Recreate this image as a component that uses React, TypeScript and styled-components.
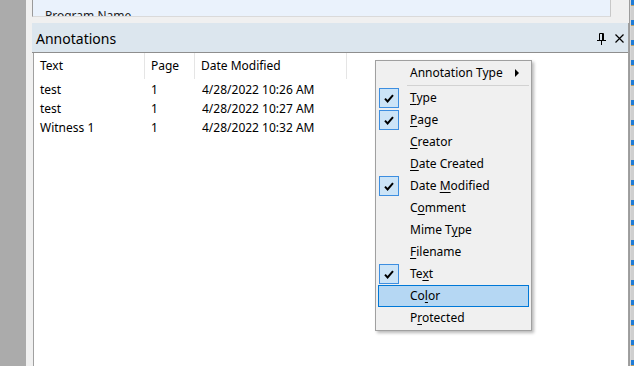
import styled, { createGlobalStyle } from "styled-components";

const GlobalStyle = createGlobalStyle`
  html, body {
    margin: 0;
    padding: 0;
    overflow: hidden;
    background: #f0f0f0;
  }
  * {
    box-sizing: border-box;
  }
`;

const FONT = `"Segoe UI", "Noto Sans", "DejaVu Sans", sans-serif`;

type Column = { key: string; title: string; width: number };

const columns: Column[] = [
  { key: "text", title: "Text", width: 111 },
  { key: "page", title: "Page", width: 50 },
  { key: "modified", title: "Date Modified", width: 152 },
];

const rows = [
  { text: "test", page: "1", modified: "4/28/2022 10:26 AM" },
  { text: "test", page: "1", modified: "4/28/2022 10:27 AM" },
  { text: "Witness 1", page: "1", modified: "4/28/2022 10:32 AM" },
];

type MenuItem = { label: string; mnemonic?: number; checked?: boolean; hot?: boolean };

const menuItems: MenuItem[] = [
  { label: "Type", mnemonic: 0, checked: true },
  { label: "Page", mnemonic: 0, checked: true },
  { label: "Creator", mnemonic: 0 },
  { label: "Date Created", mnemonic: 0 },
  { label: "Date Modified", mnemonic: 5, checked: true },
  { label: "Comment", mnemonic: 1 },
  { label: "Mime Type", mnemonic: 6 },
  { label: "Filename", mnemonic: 0 },
  { label: "Text", mnemonic: 2, checked: true },
  { label: "Color", mnemonic: 2, hot: true },
  { label: "Protected", mnemonic: 1 },
];

const Mnemonic = ({ label, index }: { label: string; index?: number }) => {
  if (index === undefined) return <>{label}</>;
  return (
    <>
      {label.slice(0, index)}
      <u>{label[index]}</u>
      {label.slice(index + 1)}
    </>
  );
};

const CheckMark = () => (
  <svg width="10" height="9" viewBox="0 0 10 9">
    <path d="M1 4.6 L3.6 7.4 L9 1.2" fill="none" stroke="#000" strokeWidth="2" />
  </svg>
);

const PinIcon = () => (
  <svg width="9" height="12" viewBox="0 0 9 12">
    <path d="M2.5 0.5 H6.5 V7.5 M2.5 0.5 V7.5" fill="none" stroke="#000" strokeWidth="1" />
    <path d="M5.5 1 V7" stroke="#000" strokeWidth="1" />
    <path d="M0 7.5 H9" stroke="#000" strokeWidth="1" />
    <path d="M4.5 8 V12" stroke="#000" strokeWidth="1" />
  </svg>
);

const CloseIcon = () => (
  <svg width="9" height="9" viewBox="0 0 9 9">
    <path d="M0.5 0.5 L8.5 8.5 M8.5 0.5 L0.5 8.5" stroke="#000" strokeWidth="1.2" />
  </svg>
);

export default function App() {
  return (
    <>
      <GlobalStyle />
      <Screen>
        <SideGutter />
        <Workspace>
          <TopDock>
            <DocumentPane>
              <ClippedLabel>Program Name</ClippedLabel>
            </DocumentPane>
            <DockFiller />
          </TopDock>
          <DockPanel>
            <PanelHeader>
              <PanelTitle>Annotations</PanelTitle>
              <HeaderButtons>
                <PinIcon />
                <CloseIcon />
              </HeaderButtons>
            </PanelHeader>
            <PanelBody>
              <Grid>
                <HeaderRow>
                  {columns.map(c => (
                    <HeaderCell key={c.key} $width={c.width}>
                      {c.title}
                    </HeaderCell>
                  ))}
                </HeaderRow>
                {rows.map((r, i) => (
                  <DataRow key={i}>
                    <Cell $width={columns[0].width}>{r.text}</Cell>
                    <Cell $width={columns[1].width}>{r.page}</Cell>
                    <Cell $width={columns[2].width}>{r.modified}</Cell>
                  </DataRow>
                ))}
              </Grid>

              <ContextMenu>
                <MenuRow>
                  <CheckSlot />
                  <MenuLabel>Annotation Type</MenuLabel>
                  <SubArrow />
                </MenuRow>
                <MenuSeparator />
                {menuItems.map(item => (
                  <MenuRow key={item.label} $hot={item.hot}>
                    <CheckSlot>
                      {item.checked && (
                        <CheckBox>
                          <CheckMark />
                        </CheckBox>
                      )}
                    </CheckSlot>
                    <MenuLabel>
                      <Mnemonic label={item.label} index={item.mnemonic} />
                    </MenuLabel>
                  </MenuRow>
                ))}
              </ContextMenu>
            </PanelBody>
          </DockPanel>
        </Workspace>
        <RightEdge />
      </Screen>
    </>
  );
}

const Screen = styled.div`
  display: flex;
  width: 634px;
  height: 366px;
  font-family: ${FONT};
  font-size: 12px;
  color: #000;
`;

const SideGutter = styled.div`
  width: 26px;
  flex-shrink: 0;
  background: #ababab;
  border-right: 6px solid #f0f0f0;
  box-sizing: content-box;
`;

const Workspace = styled.div`
  flex: 1;
  display: flex;
  flex-direction: column;
  min-width: 0;
`;

const TopDock = styled.div`
  display: flex;
  height: 17px;
  border-bottom: 6px solid #f0f0f0;
  box-sizing: content-box;
`;

const DocumentPane = styled.div`
  flex: 1;
  background: #eaf2fc;
  border-left: 1px solid #9a9a9a;
  border-right: 1px solid #c8c8c8;
  border-bottom: 1px solid #dadada;
  overflow: hidden;
  padding-left: 12px;
`;

const ClippedLabel = styled.div`
  margin-top: 7px;
  font-size: 12px;
  white-space: nowrap;
  color: #222;
`;

const DockFiller = styled.div`
  width: 18px;
  background: #f0f0f0;
`;

const DockPanel = styled.div`
  flex: 1;
  display: flex;
  flex-direction: column;
  border-right: 1px solid #a0a0a0;
`;

const PanelHeader = styled.div`
  height: 30px;
  display: flex;
  align-items: center;
  justify-content: space-between;
  background: #dce6ee;
  border-bottom: 1px solid #8e8e8e;
  padding: 0 4px 0 4px;
`;

const PanelTitle = styled.span`
  font-size: 14px;
  padding-top: 1px;
`;

const HeaderButtons = styled.div`
  display: flex;
  align-items: center;
  gap: 9px;
  padding-top: 2px;
`;

const PanelBody = styled.div`
  flex: 1;
  position: relative;
  background: #fff;
  border-left: 1px solid #a0a0a0;
  margin-left: 1px;
`;

const Grid = styled.div`
  display: flex;
  flex-direction: column;
`;

const HeaderRow = styled.div`
  display: flex;
  height: 26px;
`;

const HeaderCell = styled.div<{ $width: number }>`
  width: ${p => p.$width}px;
  padding: 4px 0 0 6px;
  border-right: 1px solid #e5e5e5;
  line-height: 18px;
`;

const DataRow = styled.div`
  display: flex;
  height: 19px;
  align-items: center;
  padding-top: 1px;
`;

const Cell = styled.div<{ $width: number }>`
  width: ${p => p.$width}px;
  padding-left: 6px;
  white-space: nowrap;
  &:nth-child(3) {
    padding-left: 7px;
  }
`;

const ContextMenu = styled.div`
  position: absolute;
  left: 341px;
  top: 7px;
  width: 157px;
  background: #f0f0f0;
  border: 1px solid #a0a0a0;
  padding: 1px 2px;
  box-shadow: 2px 2px 3px rgba(0, 0, 0, 0.28);
  display: flex;
  flex-direction: column;
`;

const MenuRow = styled.div<{ $hot?: boolean }>`
  display: flex;
  align-items: center;
  height: 22px;
  padding-bottom: 1px;
  background: ${p => (p.$hot ? "#b5d7f3" : "transparent")};
  outline: ${p => (p.$hot ? "1px solid #0078d7" : "none")};
  outline-offset: -1px;
`;

const CheckSlot = styled.div`
  width: 32px;
  height: 21px;
  display: flex;
  align-items: center;
  padding-left: 1px;
  padding-top: 1px;
`;

const CheckBox = styled.div`
  width: 20px;
  height: 20px;
  border: 1px solid #3d8ee0;
  background: #cce4f7;
  display: flex;
  align-items: center;
  justify-content: center;
`;

const MenuLabel = styled.span`
  flex: 1;
  white-space: nowrap;
  u {
    text-decoration-thickness: 1px;
    text-underline-offset: 2px;
  }
`;

const SubArrow = styled.span`
  width: 0;
  height: 0;
  border-top: 4px solid transparent;
  border-bottom: 4px solid transparent;
  border-left: 4px solid #000;
  margin-right: 10px;
`;

const MenuSeparator = styled.div`
  height: 3px;
  margin-left: 29px;
  display: flex;
  align-items: center;
  &::after {
    content: "";
    flex: 1;
    height: 1px;
    background: #d2d2d2;
  }
`;

const RightEdge = styled.div`
  width: 5px;
  flex-shrink: 0;
  background:
    repeating-linear-gradient(
      to bottom,
      #1e7bd6 0px,
      #1e7bd6 5px,
      #c0a060 5px,
      #c0a060 6px,
      #cfcfcf 6px,
      #cfcfcf 20px
    )
    right / 3px 100% no-repeat,
    #d8d8d8;
  border-left: 1px solid #9c9c9c;
`;
